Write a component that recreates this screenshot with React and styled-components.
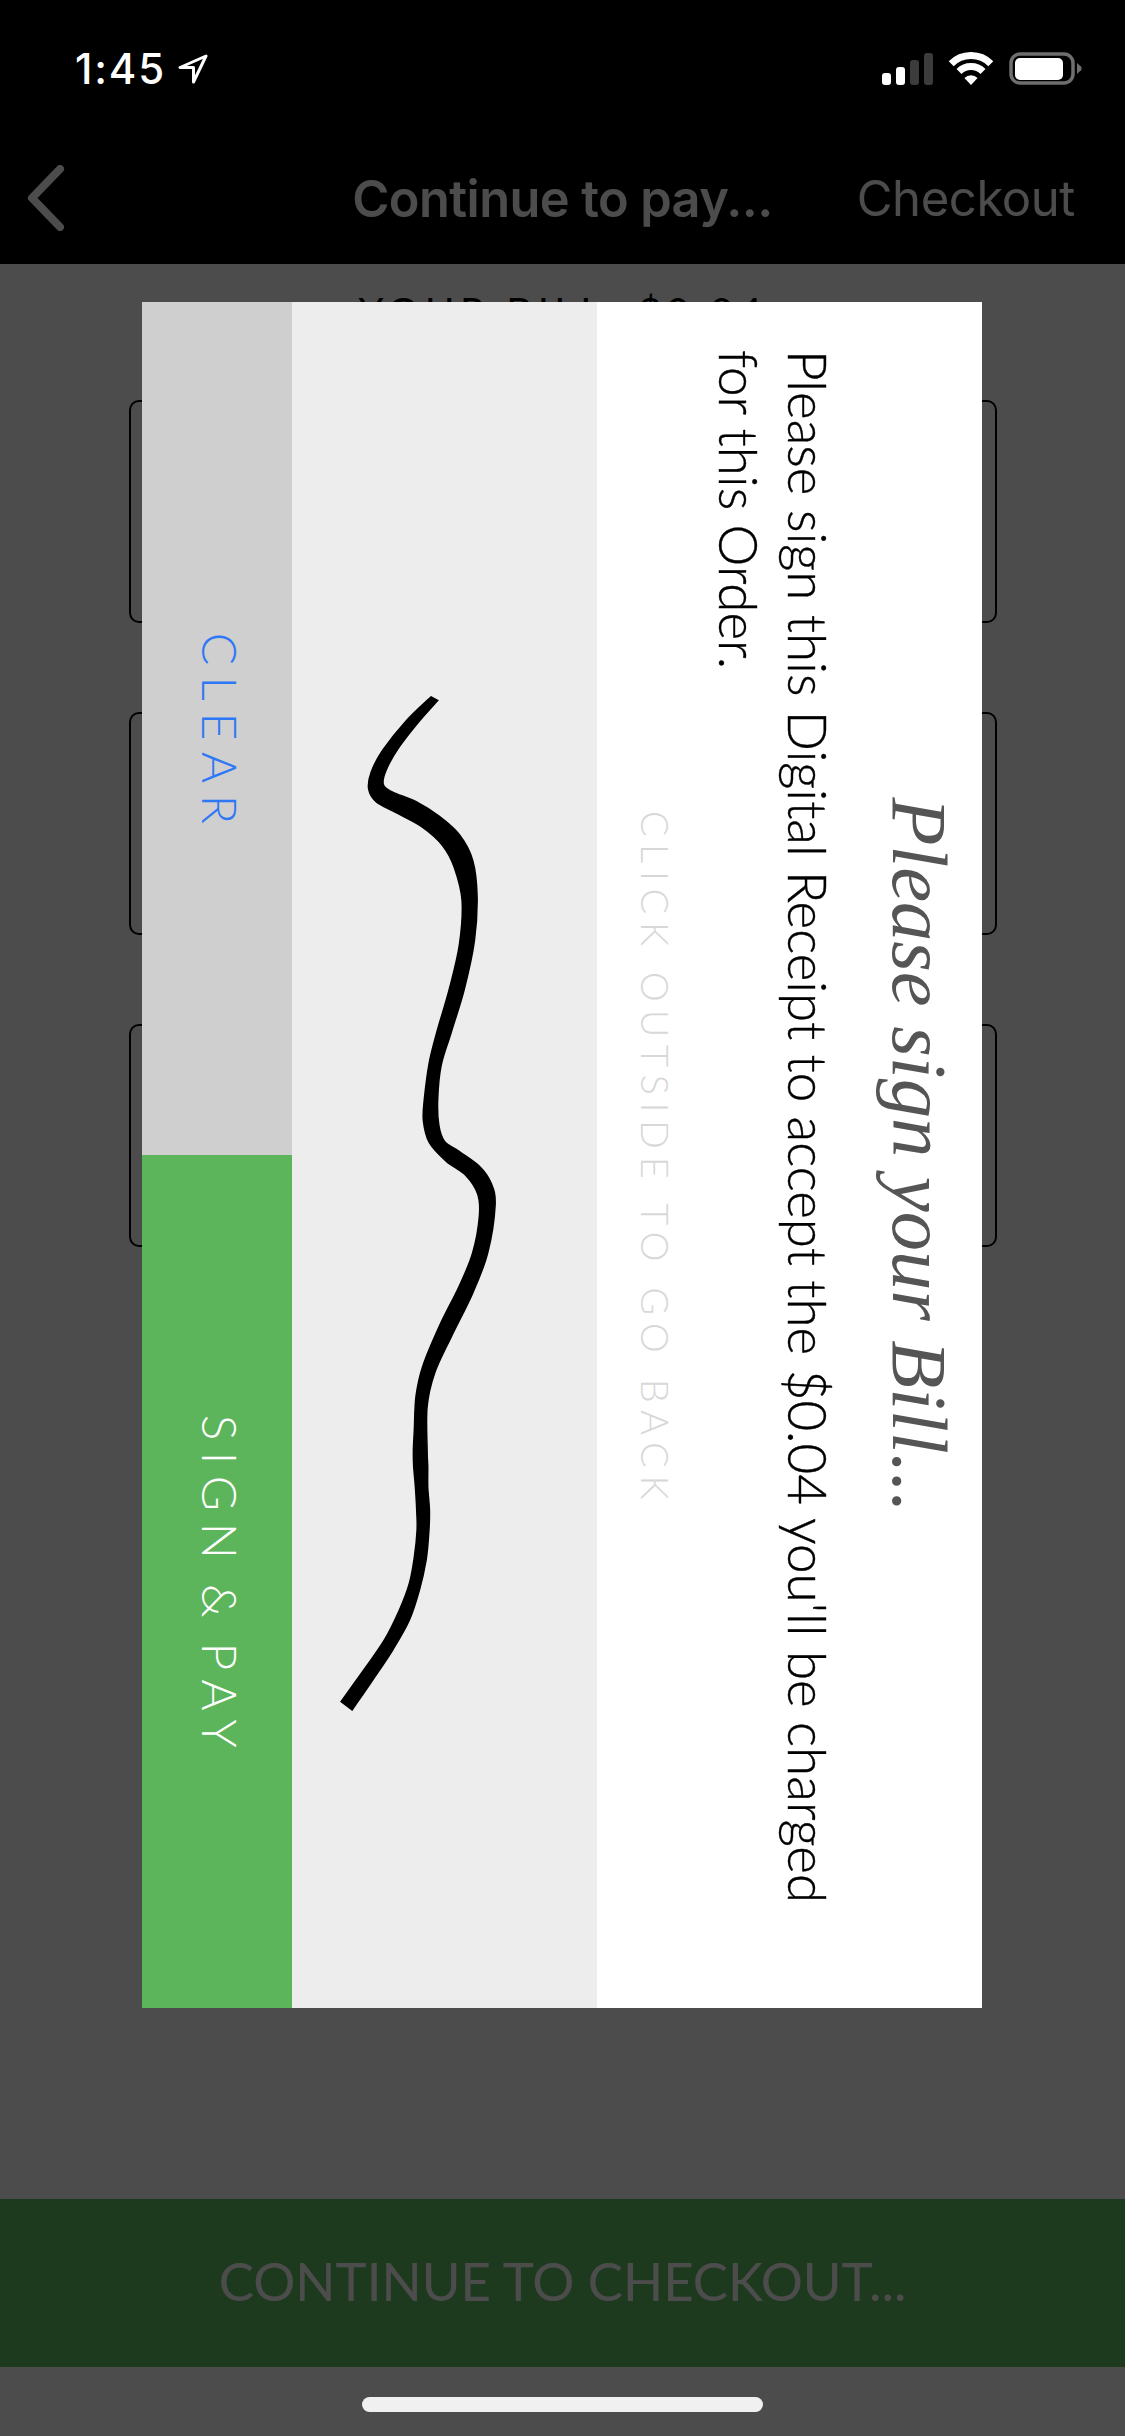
import React from "react";
import styled, { createGlobalStyle } from "styled-components";

const Global = createGlobalStyle`
  html, body { margin: 0; padding: 0; background: #000; }
  body { width: 1125px; height: 2436px; overflow: hidden; }
`;

const Page = styled.div`
  position: relative;
  width: 1125px;
  height: 2436px;
  overflow: hidden;
  display: flex;
  flex-direction: column;
  background: #fff;
  font-family: Inter, "Liberation Sans", sans-serif;
`;

const StatusBar = styled.div`
  position: relative;
  z-index: 2;
  flex: none;
  height: 132px;
  box-sizing: border-box;
  padding: 52px 43px 0 75px;
  background: #000;
  display: flex;
  justify-content: space-between;
  align-items: flex-start;
  color: #fff;
`;

const TimeGroup = styled.div`
  display: flex;
  align-items: center;
  gap: 12px;
`;

const Time = styled.span`
  font-size: 42px;
  line-height: 33px;
  font-weight: 500;
  letter-spacing: 1.800px;
`;

const StatusIcons = styled.div`
  display: flex;
  align-items: center;
  gap: 15px;
`;

const NavBar = styled.div`
  flex: none;
  height: 132px;
  box-sizing: border-box;
  padding: 0 50px;
  background: #000;
  display: grid;
  grid-template-columns: 1fr auto 1fr;
  align-items: center;
  color: #fff;
`;

const BackButton = styled.div`
  margin-left: -23px;
  display: flex;
`;

const NavTitle = styled.div`
  font-size: 50.500px;
  font-weight: 600;
  letter-spacing: -0.6px;
`;

const NavAction = styled.div`
  justify-self: end;
  font-size: 49px;
  font-weight: 400;
  letter-spacing: -0.4px;
`;

const Content = styled.div`
  flex: 1;
  min-height: 0;
  box-sizing: border-box;
  padding: 24px 128px 0 129px;
  display: flex;
  flex-direction: column;
`;

const BillHeading = styled.div`
  height: 112px;
  text-align: center;
  font-family: Lato, sans-serif;
  font-size: 40px;
  letter-spacing: 5.500px;
  color: #000;
`;

const Cards = styled.div`
  display: flex;
  flex-direction: column;
  gap: 89px;
`;

const Card = styled.div`
  height: 223px;
  box-sizing: border-box;
  border: 2px solid #000;
  border-radius: 10px;
`;

const CheckoutBar = styled.div`
  flex: none;
  height: 168px;
  box-sizing: border-box;
  padding-bottom: 5px;
  background: #65c167;
  color: #fff;
  display: flex;
  align-items: center;
  justify-content: center;
  font-family: Lato, sans-serif;
  font-size: 52.700px;
  font-weight: 400;
`;

const HomeArea = styled.div`
  position: relative;
  z-index: 2;
  flex: none;
  height: 69px;
  box-sizing: border-box;
  padding-top: 30px;
  display: flex;
  justify-content: center;
  align-items: flex-start;
`;

const HomeIndicator = styled.div`
  width: 401px;
  height: 15px;
  border-radius: 8px;
  background: #f0f0f0;
`;

const Overlay = styled.div`
  position: absolute;
  inset: 0;
  z-index: 1;
  box-sizing: border-box;
  padding: 0 1px 127px 0;
  background: rgba(0, 0, 0, 0.7);
  display: flex;
  align-items: center;
  justify-content: center;
`;

const Modal = styled.div`
  flex: none;
  width: 1706px;
  height: 840px;
  transform: rotate(90deg);
  display: flex;
  flex-direction: column;
  background: #fff;
`;

const ModalHeader = styled.div`
  flex: none;
  height: 385px;
  box-sizing: border-box;
  padding: 22px 48px 0;
  display: flex;
  flex-direction: column;
`;

const ModalTitle = styled.div`
  height: 82px;
  text-align: center;
  font-family: "Liberation Serif", serif;
  font-style: italic;
  font-size: 78.500px;
  line-height: 82px;
  color: #555;
`;

const ModalBody = styled.div`
  margin-top: 35px;
  padding-right: 40px;
  font-family: Lato, sans-serif;
  font-weight: 300;
  font-size: 53px;
  line-height: 69px;
  color: #000;
  -webkit-text-stroke: 0.4px #000;
`;

const ModalHint = styled.div`
  margin-top: 27px;
  padding-left: 8px;
  text-align: center;
  font-family: Lato, sans-serif;
  font-weight: 300;
  font-size: 38px;
  line-height: 44px;
  letter-spacing: 7.700px;
  color: #d8d8d8;
`;

const SignatureArea = styled.div`
  flex: none;
  height: 305px;
  background: #ededed;
`;

const SignatureSvg = styled.svg`
  display: block;
  width: 1706px;
  height: 305px;
`;

const ButtonRow = styled.div`
  flex: 1;
  display: flex;
`;

const ActionButton = styled.div`
  flex: 1;
  box-sizing: border-box;
  padding: 0 0 8px 11px;
  display: flex;
  align-items: center;
  justify-content: center;
  background: ${(p) => (p.$primary ? "#5cb55b" : "#cfcfcf")};
  color: ${(p) => (p.$primary ? "#fff" : "#2f78f5")};
  font-family: Lato, sans-serif;
  font-weight: 300;
  font-size: 48px;
  letter-spacing: 11.500px;
  word-spacing: -11px;
`;

const stretched = ([x, y]) => [130 + x / 3, 600 + y / 1.3635];
const cropped = ([x, y]) => [330 + x / 3, 1450 + y / 3];

const upperEdge = [
  ...[
    [905,132],[830,165],[760,205],[725,235],[718,258],[740,275],[800,290],[880,310],[940,335],[975,365],[998,410],[990,470],
    [960,530],[925,585],[900,630],[885,680],[882,710],[900,740],[950,765],[1010,785],[1045,810],[1050,840],[1030,890],[990,935],
    [930,990],[880,1045],[860,1085],[855,1130],
  ].map(stretched),
  ...[[252,0],[253,50],[258,110],[262,180],[263,240],[255,320],[240,400],[210,480],[165,570],[110,650],[35,755]].map(cropped),
];
const lowerEdge = [
  ...[[68,780],[130,690],[190,600],[240,510],[270,420],[290,330],[298,250],[300,180],[295,110],[295,50],[293,0]].map(cropped),
  ...[
    [893,1100],[915,1055],[965,1005],[1030,945],
    [1075,890],[1097,825],[1085,795],[1050,772],[990,752],[945,738],[928,715],[925,680],[935,635],[965,590],[1005,530],[1035,465],
    [1043,405],[1030,355],[990,320],[930,295],[860,275],[790,262],[762,252],[770,232],[810,200],[870,165],[925,137],
  ].map(stretched),
];

function smoothOpen(pts) {
  const n = pts.length;
  let d = "";
  for (let i = 0; i < n - 1; i++) {
    const p0 = pts[Math.max(i - 1, 0)], p1 = pts[i], p2 = pts[i + 1], p3 = pts[Math.min(i + 2, n - 1)];
    const c1 = [p1[0] + (p2[0] - p0[0]) / 6, p1[1] + (p2[1] - p0[1]) / 6];
    const c2 = [p2[0] - (p3[0] - p1[0]) / 6, p2[1] - (p3[1] - p1[1]) / 6];
    d += `C${c1[0].toFixed(1)} ${c1[1].toFixed(1)} ${c2[0].toFixed(1)} ${c2[1].toFixed(1)} ${p2[0].toFixed(1)} ${p2[1].toFixed(1)}`;
  }
  return d;
}

function signaturePath() {
  const a = upperEdge;
  const b = lowerEdge;
  return `M${a[0][0].toFixed(1)} ${a[0][1].toFixed(1)}${smoothOpen(a)}L${b[0][0].toFixed(1)} ${b[0][1].toFixed(1)}${smoothOpen(b)}Z`;
}

function Signature() {
  return (
    <SignatureSvg viewBox="0 0 1706 305">
      <g transform="matrix(0 -1 1 0 -302 597.6)">
        <path d={signaturePath()} fill="#000" stroke="#000" strokeWidth="1.500" />
      </g>
    </SignatureSvg>
  );
}

function LocationArrow() {
  return (
    <svg width="30" height="30" viewBox="0 0 30 30" fill="none">
      <path d="M28 2L2 13.500h13.500V28z" stroke="#fff" strokeWidth="3" strokeLinejoin="round" />
    </svg>
  );
}

function Signal() {
  return (
    <svg width="51" height="32" viewBox="0 0 51 32">
      <rect x="0" y="20" width="9" height="12" rx="3" fill="#fff" />
      <rect x="14" y="14" width="9" height="18" rx="3" fill="#fff" />
      <rect x="28" y="7" width="9" height="25" rx="3" fill="#3c3c3c" />
      <rect x="42" y="0" width="9" height="32" rx="3" fill="#3c3c3c" />
    </svg>
  );
}

function Wifi() {
  return (
    <svg width="46" height="33" viewBox="0 0 46 33" fill="none">
      <path d="M3.200 11.700A28 28 0 0 1 42.800 11.700" stroke="#fff" strokeWidth="7" />
      <path d="M11 19.500A17 17 0 0 1 35 19.500" stroke="#fff" strokeWidth="7" />
      <path d="M23 33L16.400 26A9.600 9.600 0 0 1 29.600 26z" fill="#fff" />
    </svg>
  );
}

function Battery() {
  return (
    <svg width="73" height="33" viewBox="0 0 73 33">
      <rect x="2" y="2" width="62" height="29" rx="9" fill="none" stroke="#6e6e6e" strokeWidth="3.500" />
      <rect x="6" y="6" width="48" height="22" rx="5" fill="#fff" />
      <path d="M68 11l4 3.500c.8.800.8 3 0 3.800L68 22z" fill="#6e6e6e" />
    </svg>
  );
}

function BackChevron() {
  return (
    <svg width="38" height="66" viewBox="0 0 38 66" fill="none">
      <path d="M33 4L5 33l28 29" stroke="#fff" strokeWidth="8" strokeLinecap="round" strokeLinejoin="round" />
    </svg>
  );
}

export default function App() {
  return (
    <Page>
      <Global />
      <StatusBar>
        <TimeGroup>
          <Time>1:45</Time>
          <LocationArrow />
        </TimeGroup>
        <StatusIcons>
          <Signal />
          <Wifi />
          <Battery />
        </StatusIcons>
      </StatusBar>
      <NavBar>
        <BackButton>
          <BackChevron />
        </BackButton>
        <NavTitle>Continue to pay...</NavTitle>
        <NavAction>Checkout</NavAction>
      </NavBar>
      <Content>
        <BillHeading>YOUR BILL: $0.04</BillHeading>
        <Cards>
          <Card />
          <Card />
          <Card />
        </Cards>
      </Content>
      <CheckoutBar>CONTINUE TO CHECKOUT...</CheckoutBar>
      <HomeArea>
        <HomeIndicator />
      </HomeArea>
      <Overlay>
        <Modal>
          <ModalHeader>
            <ModalTitle>Please sign your Bill...</ModalTitle>
            <ModalBody>
              Please sign this Digital Receipt to accept the $0.04 you'll be charged for this Order.
            </ModalBody>
            <ModalHint>CLICK OUTSIDE TO GO BACK</ModalHint>
          </ModalHeader>
          <SignatureArea>
            <Signature />
          </SignatureArea>
          <ButtonRow>
            <ActionButton>CLEAR</ActionButton>
            <ActionButton $primary>SIGN &amp; PAY</ActionButton>
          </ButtonRow>
        </Modal>
      </Overlay>
    </Page>
  );
}
